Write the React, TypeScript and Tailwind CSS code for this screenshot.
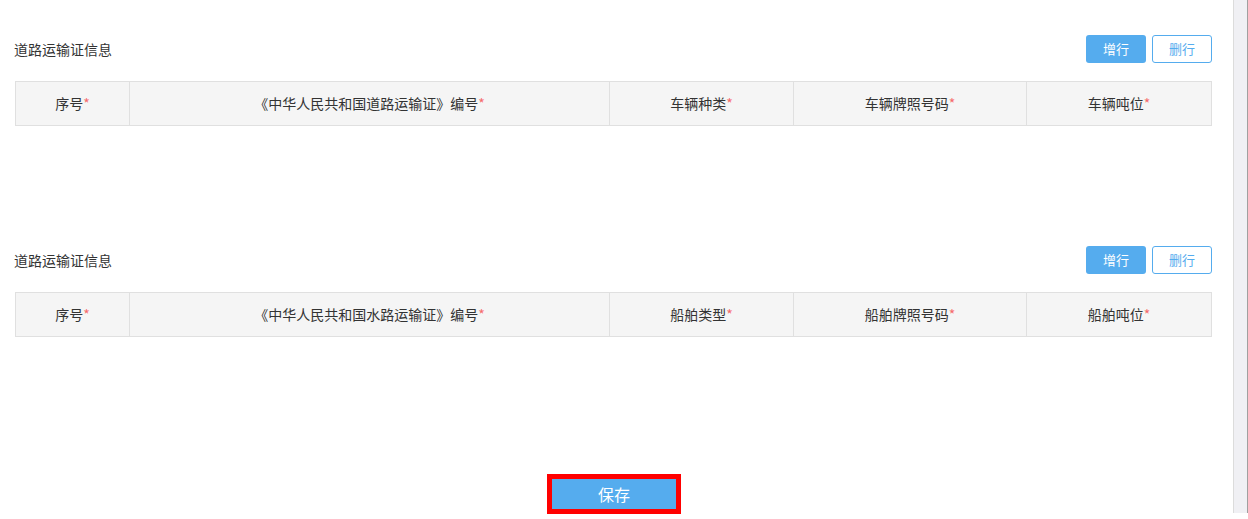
import React from 'react';

const roadCols = [
  { label: '序号', w: 'w-[114px]' },
  { label: '《中华人民共和国道路运输证》编号', w: 'w-[480px]' },
  { label: '车辆种类', w: 'w-[184px]' },
  { label: '车辆牌照号码', w: 'w-[233px]' },
  { label: '车辆吨位', w: 'flex-1' },
];

const waterCols = [
  { label: '序号', w: 'w-[114px]' },
  { label: '《中华人民共和国水路运输证》编号', w: 'w-[480px]' },
  { label: '船舶类型', w: 'w-[184px]' },
  { label: '船舶牌照号码', w: 'w-[233px]' },
  { label: '船舶吨位', w: 'flex-1' },
];

function Section({ title, cols }: { title: string; cols: { label: string; w: string }[] }) {
  return (
    <div>
      {/* Header row */}
      <div className="flex items-center justify-between h-[28px]">
        <span className="text-[14px] text-[#333] -ml-px">{title}</span>
        <div className="flex gap-[6px]">
          <button className="h-[28px] w-[60px] rounded-[3px] bg-[#55acee] text-white text-[13px]">增行</button>
          <button className="h-[28px] w-[60px] rounded-[3px] border border-[#55acee] bg-white text-[#55acee] text-[13px]">删行</button>
        </div>
      </div>

      {/* Table header */}
      <div className="mt-[18px] flex h-[45px] border border-[#e0e0e0] bg-[#f5f5f5]">
        {cols.map((c, i) => (
          <div
            key={i}
            className={`${c.w} flex items-center justify-center text-[14px] text-[#333] ${i < cols.length - 1 ? 'border-r border-[#e0e0e0]' : ''}`}
          >
            {c.label}
            <span className="text-[#f56c6c]">*</span>
          </div>
        ))}
      </div>
    </div>
  );
}

export default function App() {
  return (
    <div
      className="flex h-[519px] w-[1248px] bg-white overflow-hidden"
      style={{ fontFamily: '"Noto Sans CJK SC", "Noto Sans", sans-serif' }}
    >
      {/* Main content */}
      <div className="flex-1 flex flex-col pl-[15px] pr-[21px] pt-[35px]">
        <Section title="道路运输证信息" cols={roadCols} />
        <div className="h-[120px]" />
        <Section title="道路运输证信息" cols={waterCols} />

        {/* Save */}
        <div className="mt-[137px] flex justify-center">
          <div className="border-[5px] border-[#ff0000] ml-[1px]">
            <button className="h-[30px] w-[124px] bg-[#55acee] text-white text-[16px]">保存</button>
          </div>
        </div>
      </div>

      {/* Scrollbar */}
      <div className="w-[15px] flex flex-col">
        <div className="h-[513px] border-l border-[#dcdcdc] border-r border-r-[#a0a0a0] bg-[#f0f0f4]" />
      </div>
    </div>
  );
}
